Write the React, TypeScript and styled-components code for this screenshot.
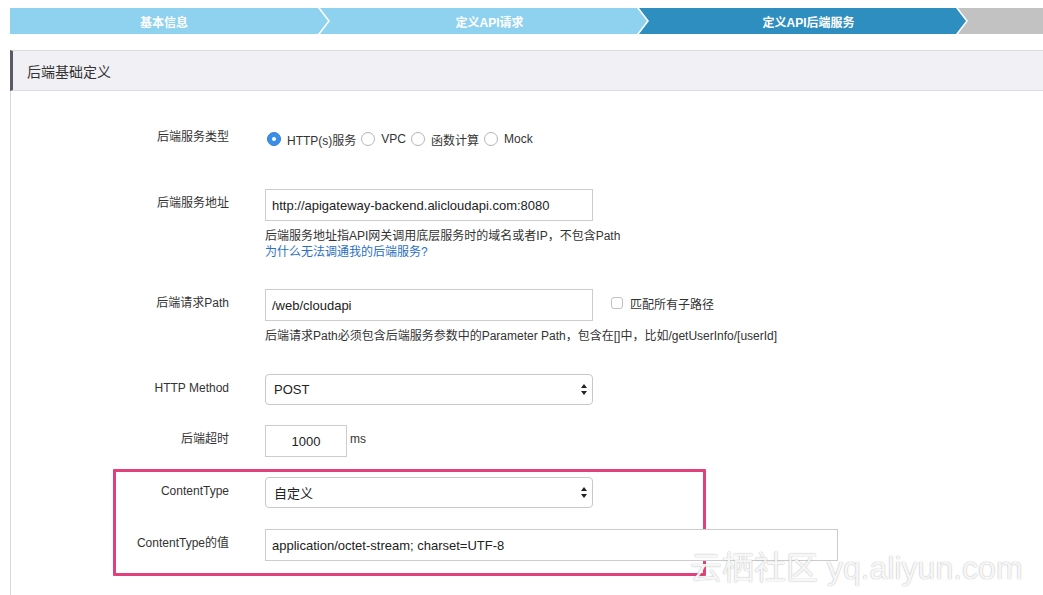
import React from "react";
import styled, { createGlobalStyle } from "styled-components";

const GlobalStyle = createGlobalStyle`
  html, body { margin: 0; padding: 0; background: #ffffff; }
  body {
    font-family: "Liberation Sans", Arial, "Noto Sans CJK SC", sans-serif;
    color: #333333;
    width: 1043px;
    height: 595px;
    overflow: hidden;
  }
  * { box-sizing: border-box; }
`;

const Page = styled.div`
  position: relative;
  padding: 8px 0 0 10px;
  height: 595px;
  overflow: hidden;
`;

const Steps = styled.div`
  display: flex;
  height: 26px;
  overflow: hidden;
`;

const Step = styled.div<{ $bg: string; $first?: boolean }>`
  flex: 0 0 ${(p) => (p.$first ? 318 : 327)}px;
  margin-left: ${(p) => (p.$first ? 0 : -8)}px;
  height: 26px;
  background: ${(p) => p.$bg};
  color: #ffffff;
  font-size: 12px;
  font-weight: bold;
  display: flex;
  align-items: center;
  justify-content: center;
  padding-left: ${(p) => (p.$first ? 0 : 14)}px;
  padding-right: ${(p) => (p.$first ? 10 : 2)}px;
  clip-path: ${(p) =>
    p.$first
      ? "polygon(0 0, calc(100% - 10px) 0, 100% 50%, calc(100% - 10px) 100%, 0 100%)"
      : "polygon(0 0, calc(100% - 10px) 0, 100% 50%, calc(100% - 10px) 100%, 0 100%, 10px 50%)"};
`;

const Panel = styled.div`
  margin-top: 16px;
`;

const PanelHeader = styled.div`
  height: 41px;
  background: #f0f0f5;
  border-top: 1px solid #dcdcdf;
  border-bottom: 1px solid #dcdcdf;
  border-left: 3px solid #5b5b68;
  display: flex;
  align-items: center;
  padding-left: 14px;
  font-size: 14px;
  color: #333;
`;

const PanelBody = styled.div`
  border-left: 1px solid #d8d8d8;
  padding-top: 32px;
  min-height: 520px;
`;

const FormRow = styled.div<{ $mb?: number; $labelWidth?: number }>`
  display: grid;
  grid-template-columns: ${(p) => p.$labelWidth ?? 218}px 1fr;
  column-gap: 36px;
  align-items: start;
  margin-bottom: ${(p) => p.$mb ?? 0}px;
`;

const Label = styled.div`
  text-align: right;
  font-size: 12px;
  line-height: 18px;
  padding-top: 5px;
  color: #333;
  white-space: nowrap;
`;

const Control = styled.div`
  display: flex;
  flex-direction: column;
`;

const Inline = styled.div<{ $gap?: number }>`
  display: flex;
  align-items: center;
  gap: ${(p) => p.$gap ?? 0}px;
`;

const RadioGroup = styled.div`
  display: flex;
  align-items: center;
  height: 32px;
  font-size: 12px;
  margin-left: 2px;
`;

const RadioItem = styled.label`
  display: flex;
  align-items: center;
  gap: 6px;
  margin-right: 5px;
  color: #333;
  white-space: nowrap;
`;

const RadioCircle = styled.span<{ $checked?: boolean }>`
  width: 14px;
  height: 14px;
  border-radius: 50%;
  display: inline-flex;
  align-items: center;
  justify-content: center;
  background: ${(p) => (p.$checked ? "#3b8ee8" : "#ffffff")};
  border: 1px solid ${(p) => (p.$checked ? "#2f7fd6" : "#b4b4b4")};
  &::after {
    content: "";
    width: 4px;
    height: 4px;
    border-radius: 50%;
    background: ${(p) => (p.$checked ? "#ffffff" : "transparent")};
  }
`;

const TextInput = styled.div<{ $width: number; $center?: boolean }>`
  width: ${(p) => p.$width}px;
  height: 32px;
  border: 1px solid #cccccc;
  background: #fff;
  font-size: 13px;
  color: #222;
  display: flex;
  align-items: center;
  justify-content: ${(p) => (p.$center ? "center" : "flex-start")};
  padding: 0 ${(p) => (p.$center ? 0 : 6)}px;
  white-space: nowrap;
`;

const SelectBox = styled.div`
  width: 328px;
  height: 31px;
  border: 1px solid #c8c8c8;
  border-radius: 4px;
  background: #fff;
  font-size: 13px;
  color: #222;
  display: flex;
  align-items: center;
  justify-content: space-between;
  padding: 0 5px 0 8px;
`;

const Help = styled.div<{ $first?: boolean; $link?: boolean }>`
  font-size: 12px;
  line-height: 16px;
  margin-top: ${(p) => (p.$first ? 7 : 0)}px;
  color: ${(p) => (p.$link ? "#2a6fc1" : "#333")};
  white-space: nowrap;
`;

const CheckBox = styled.span`
  width: 12px;
  height: 12px;
  border: 1px solid #c0c0c0;
  border-radius: 3px;
  background: #fff;
`;

const CheckLabel = styled.label`
  display: flex;
  align-items: center;
  gap: 7px;
  font-size: 12px;
  color: #333;
  margin-left: 18px;
  margin-top: -4px;
`;

const Unit = styled.span`
  font-size: 12px;
  color: #333;
  margin-top: -4px;
`;

const HighlightBox = styled.div`
  margin-left: 102px;
  width: 593px;
  border: 3px solid #e0407c;
  border-radius: 1px;
  padding: 5px 0 12px 0;
  display: flex;
  flex-direction: column;
  gap: 21px;
`;

const Watermark = styled.div`
  position: absolute;
  left: 690px;
  top: 548px;
  font-size: 32px;
  line-height: 40px;
  color: rgba(255, 255, 255, 0.92);
  text-shadow: 0 0 1px rgba(0, 0, 0, 0.3), 0 0 2px rgba(0, 0, 0, 0.1);
  font-family: "Liberation Sans", "Noto Sans CJK SC", sans-serif;
  white-space: nowrap;
  pointer-events: none;
`;

const SelectArrow = () => (
  <svg width="6" height="11" viewBox="0 0 6 11">
    <path d="M3 0 L6 4 L0 4 Z" fill="#222" />
    <path d="M3 11 L6 7 L0 7 Z" fill="#222" />
  </svg>
);

const Radio = ({ label, checked }: { label: string; checked?: boolean }) => (
  <RadioItem>
    <RadioCircle $checked={checked} />
    {label}
  </RadioItem>
);

export default function App() {
  return (
    <>
      <GlobalStyle />
      <Page>
        <Steps>
          <Step $bg="#8fd2ef" $first>
            基本信息
          </Step>
          <Step $bg="#8fd2ef">定义API请求</Step>
          <Step $bg="#2e8ec0">定义API后端服务</Step>
          <Step $bg="#c2c2c2" />
        </Steps>
        <Panel>
          <PanelHeader>后端基础定义</PanelHeader>
          <PanelBody>
            <FormRow $mb={34}>
              <Label>后端服务类型</Label>
              <RadioGroup>
                <Radio label="HTTP(s)服务" checked />
                <Radio label="VPC" />
                <Radio label="函数计算" />
                <Radio label="Mock" />
              </RadioGroup>
            </FormRow>
            <FormRow $mb={29}>
              <Label>后端服务地址</Label>
              <Control>
                <TextInput $width={328}>http://apigateway-backend.alicloudapi.com:8080</TextInput>
                <Help $first>后端服务地址指API网关调用底层服务时的域名或者IP，不包含Path</Help>
                <Help $link>为什么无法调通我的后端服务?</Help>
              </Control>
            </FormRow>
            <FormRow $mb={30}>
              <Label>后端请求Path</Label>
              <Control>
                <Inline>
                  <TextInput $width={328}>/web/cloudapi</TextInput>
                  <CheckLabel>
                    <CheckBox />
                    匹配所有子路径
                  </CheckLabel>
                </Inline>
                <Help $first>
                  后端请求Path必须包含后端服务参数中的Parameter Path，包含在[]中，比如/getUserInfo/[userId]
                </Help>
              </Control>
            </FormRow>
            <FormRow $mb={20}>
              <Label>HTTP Method</Label>
              <SelectBox>
                POST
                <SelectArrow />
              </SelectBox>
            </FormRow>
            <FormRow $mb={12}>
              <Label>后端超时</Label>
              <Inline $gap={3}>
                <TextInput $width={82} $center>
                  1000
                </TextInput>
                <Unit>ms</Unit>
              </Inline>
            </FormRow>
            <HighlightBox>
              <FormRow $labelWidth={113}>
                <Label>ContentType</Label>
                <SelectBox>
                  自定义
                  <SelectArrow />
                </SelectBox>
              </FormRow>
              <FormRow $labelWidth={113}>
                <Label>ContentType的值</Label>
                <Control>
                  <TextInput $width={573}>application/octet-stream; charset=UTF-8</TextInput>
                </Control>
              </FormRow>
            </HighlightBox>
          </PanelBody>
        </Panel>
        <Watermark>云栖社区 yq.aliyun.com</Watermark>
      </Page>
    </>
  );
}
